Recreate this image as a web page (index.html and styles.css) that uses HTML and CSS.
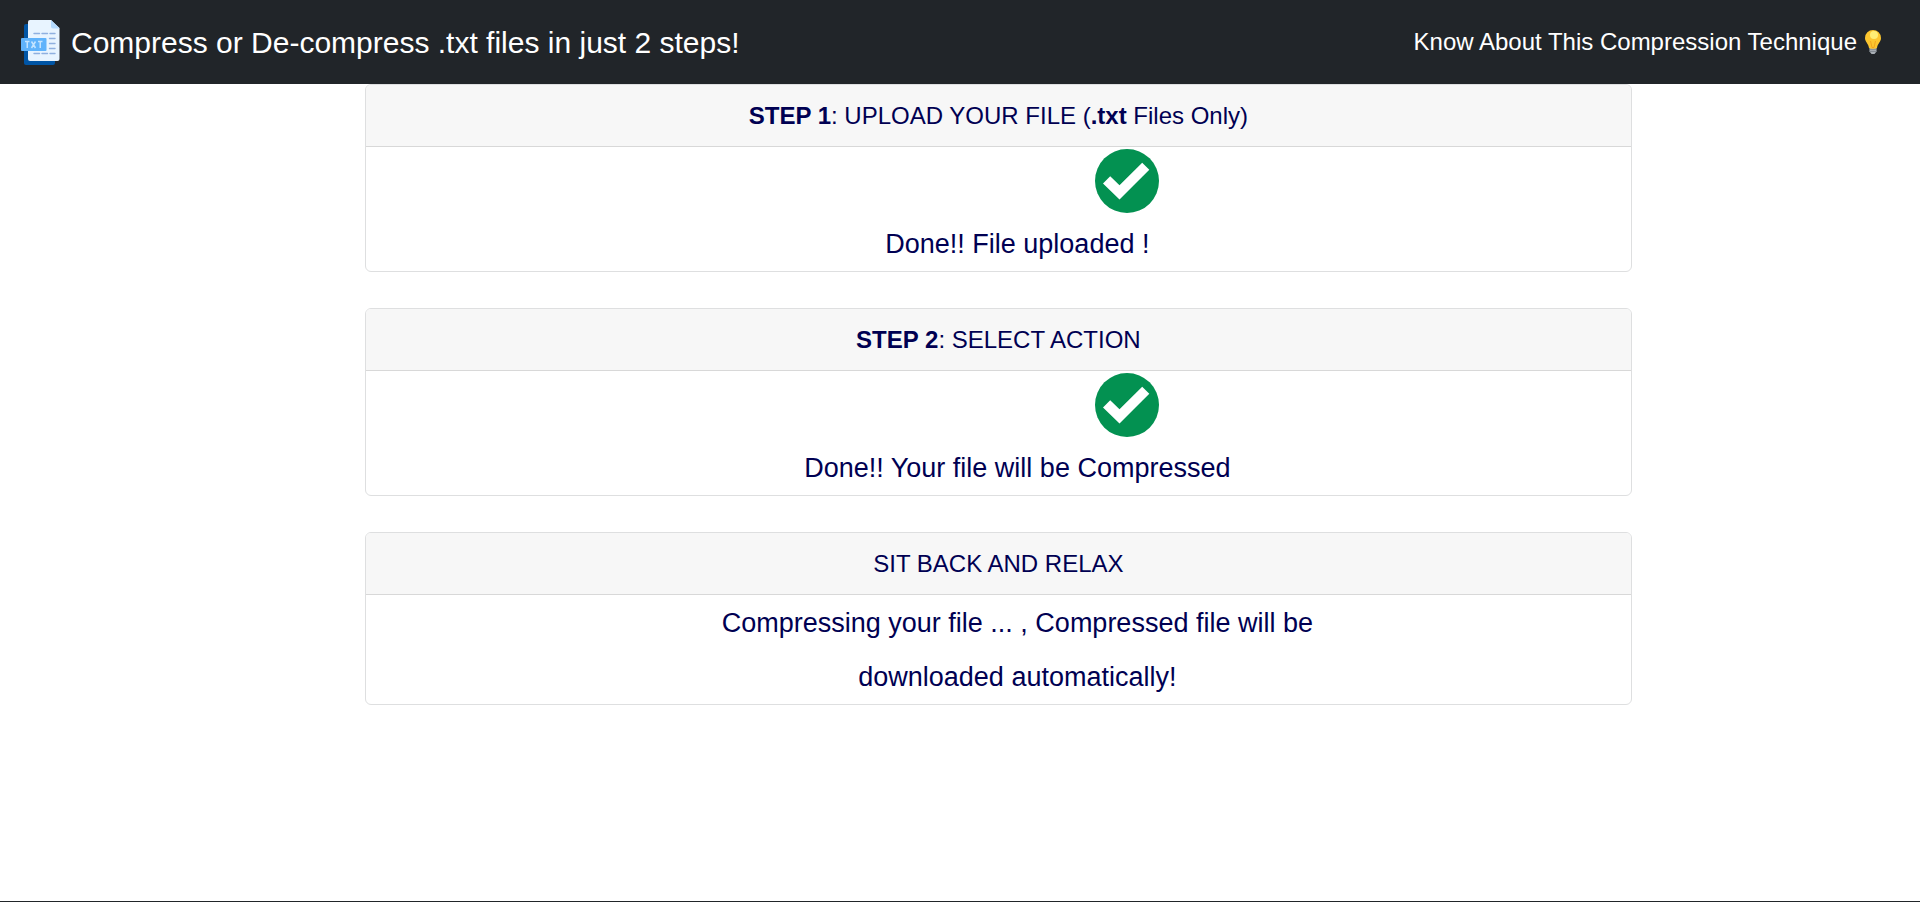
FILE: index.html
```html
<!DOCTYPE html>
<html lang="en">
<head>
<meta charset="utf-8">
<title>Text File Compressor</title>
<link rel="stylesheet" href="styles.css">
</head>
<body>
<header class="navbar">
  <a class="brand" href="#">
    <svg class="brand-icon" viewBox="0 0 39 46" aria-hidden="true">
      <rect x="3" y="4" width="31" height="41" rx="2" fill="#0055a5"/>
      <path d="M9 0H30L38.500 8V39a2 2 0 0 1-2 2H9a2 2 0 0 1-2-2V2a2 2 0 0 1 2-2Z" fill="#e8f4ff"/>
      <path d="M30 0 38.500 8.500H32a2 2 0 0 1-2-2Z" fill="#b3dafe"/>
      <path d="M13 13.500h5.500m2.500 0h5.500m2.500 0h5M28.500 18.500h5.500M28.500 23.500h5.500M28.500 28.500h5.500M13 33.500h5.500m2.500 0h5.500m2.500 0h5" stroke="#8fb0e0" stroke-width="1.400" stroke-linecap="round"/>
      <rect x="0" y="18" width="25.500" height="13" rx="1" fill="#60b3fb"/>
      <path d="M4 21.500h4.500M6.250 21.500v6.500M10.500 21.500l4 6.500m0-6.500-4 6.500M17 21.500h4.500M19.250 21.500v6.500" stroke="#c4e4ff" stroke-width="1.500" fill="none"/>
    </svg>
    <span>Compress or De-compress .txt files in just 2 steps!</span>
  </a>
  <a class="about" href="#">
    <span>Know About This Compression Technique</span>
    <svg class="bulb" viewBox="0 0 16 24" aria-hidden="true">
      <path d="M4.500 17h7v4.500L9.500 24h-3l-2-2.500Z" fill="#a9afb5"/>
      <path d="M4.500 19.200h7M4.500 21.400h7" stroke="#737b82" stroke-width=".8"/>
      <path d="M8 0a8 8 0 0 1 8 8c0 4-3.500 5.500-4 10-1 1-7 1-8 0C3.500 13.500 0 12 0 8a8 8 0 0 1 8-8Z" fill="#fcc62f"/>
      <path d="M5.500 11 7 17.500h2L10.500 11" fill="none" stroke="#f2a51e" stroke-width="1"/>
      <circle cx="9" cy="5" r="4" fill="#ffee75"/>
    </svg>
  </a>
</header>
<main class="steps">
  <section class="card">
    <h2 class="card-header"><b>STEP 1</b>: UPLOAD YOUR FILE (<b>.txt</b> Files Only)</h2>
    <div class="card-body">
      <svg class="tick" viewBox="0 0 64 64" aria-hidden="true"><circle cx="32" cy="32" r="32" fill="#039151"/><path d="M8 34.500 15.200 27.200 24.500 36.300 47.200 13.700 54.300 20.800 24.500 50.600Z" fill="#fff"/></svg>
      <p class="message">Done!! File uploaded !</p>
    </div>
  </section>
  <section class="card">
    <h2 class="card-header"><b>STEP 2</b>: SELECT ACTION</h2>
    <div class="card-body">
      <svg class="tick" viewBox="0 0 64 64" aria-hidden="true"><circle cx="32" cy="32" r="32" fill="#039151"/><path d="M8 34.500 15.200 27.200 24.500 36.300 47.200 13.700 54.300 20.800 24.500 50.600Z" fill="#fff"/></svg>
      <p class="message">Done!! Your file will be Compressed</p>
    </div>
  </section>
  <section class="card">
    <h2 class="card-header">SIT BACK AND RELAX</h2>
    <div class="card-body">
      <p class="message">Compressing your file ... , Compressed file will be downloaded automatically!</p>
    </div>
  </section>
</main>
<footer class="footer"></footer>
</body>
</html>
```
FILE: styles.css
```css
* {
  box-sizing: border-box;
}

body {
  display: flex;
  flex-direction: column;
  min-height: 100vh;
  margin: 0;
  background: #fff;
  color: #000052;
  font-family: "Liberation Sans", Arial, sans-serif;
}

.navbar {
  display: flex;
  align-items: center;
  justify-content: space-between;
  min-height: 84px;
  padding: 0 39px 0 21px;
  background: #212529;
}

.brand,
.about {
  display: flex;
  align-items: center;
  color: #fff;
  text-decoration: none;
}

.brand {
  gap: 11px;
  padding-top: 2px;
  font-size: 30px;
}

.brand-icon {
  width: 39px;
  height: 46px;
}

.about {
  gap: 8px;
  font-size: 24px;
}

.bulb {
  width: 16px;
  height: 24px;
}

.steps {
  display: flex;
  flex: 1;
  flex-direction: column;
  gap: 36px;
  width: 66%;
  margin-left: 19%;
}

.card {
  border: 1px solid #dedfe0;
  border-radius: 6px;
  overflow: hidden;
}

.card-header {
  margin: 0;
  padding: 13px 16px 12px;
  border-bottom: 1px solid #d8d8d8;
  background: #f7f7f7;
  font-size: 24px;
  font-weight: 400;
  line-height: 36px;
  text-align: center;
}

.card-body {
  padding-top: 1px;
}

.tick {
  display: block;
  width: 64px;
  height: 64px;
  margin: 1px 0 4px 57.6%;
}

.message {
  width: 50%;
  margin: 0 0 0 26.5%;
  font-size: 27px;
  line-height: 54px;
  text-align: center;
}

.footer {
  border-top: 1px solid #212529;
}
```
